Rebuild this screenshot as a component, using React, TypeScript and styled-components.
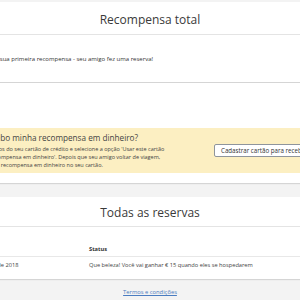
import styled, { createGlobalStyle } from "styled-components"

const Global = createGlobalStyle`
  html, body { margin: 0; padding: 0; background: #f3f3f3; overflow: hidden; }
  body { font-family: "Open Sans", "Noto Sans", sans-serif; color: #3c3c3c; }
`

const Page = styled.div`
  width: 420px;
  margin-left: -60px;
  padding-top: 2px;
`

const Card = styled.section`
  background: #fff;
  box-shadow: 0 1px 1px rgba(0, 0, 0, 0.12);
`

const CardHeader = styled.header<{ $h: number }>`
  height: ${p => p.$h}px;
  display: flex;
  align-items: center;
  justify-content: center;
  border-bottom: 1px solid #e4e4e4;
`

const Title = styled.h2`
  margin: 0;
  padding-top: 2px;
  font-size: 12px;
  font-weight: 400;
  color: #3a3a3a;
`

const Message = styled.p`
  margin: 0;
  height: 47px;
  padding: 1px 18px 0 22px;
  box-sizing: border-box;
  display: flex;
  align-items: center;
  font-size: 6px;
  color: #333;
`

const CashCard = styled(Card)`
  margin-top: 1px;
  padding: 45px 0 10px;
`

const Notice = styled.div`
  background: #fcefc2;
  height: 45px;
  padding: 0 18px;
  display: flex;
  align-items: center;
  gap: 16px;
`

const NoticeText = styled.div`
  width: 240px;
  flex-shrink: 0;
`

const NoticeTitle = styled.h3`
  margin: 0 0 1px 1px;
  font-size: 8.2px;
  font-weight: 400;
  color: #444;
  line-height: 12px;
  white-space: nowrap;
`

const NoticeBody = styled.p`
  margin: 0 0 0 8px;
  font-size: 5.5px;
  line-height: 8px;
  color: #444;
  white-space: nowrap;
`

const Button = styled.button`
  flex-shrink: 0;
  height: 13px;
  padding: 0 6px;
  background: #fff;
  border: 1px solid #8f959c;
  border-radius: 2px;
  font-family: inherit;
  font-size: 6.2px;
  color: #333;
`

const Bookings = styled(Card)`
  margin-top: 14px;
  padding-bottom: 7px;
`

const Table = styled.table`
  width: 100%;
  border-collapse: collapse;
  margin-top: 14px;
  font-size: 5.7px;
  color: #444;
`

const Cell = styled.td<{ $head?: boolean }>`
  height: 15px;
  padding: 0 0 0 18px;
  font-weight: ${p => (p.$head ? 700 : 400)};
  color: ${p => (p.$head ? "#333" : "#444")};
  border-bottom: ${p => (p.$head ? "1px solid #e8e8e8" : "none")};
  &:first-child { width: 113px; }
`

const Footer = styled.footer`
  padding-top: 9px;
  text-align: center;
  font-size: 5.8px;
`

const Link = styled.a`
  color: #4a7cc0;
  text-decoration: underline;
`

export default function App() {
  return (
    <Page>
      <Global />
      <Card>
        <CardHeader $h={32}>
          <Title>Recompensa total</Title>
        </CardHeader>
        <Message>Você ganhou sua primeira recompensa - seu amigo fez uma reserva!</Message>
      </Card>
      <CashCard>
        <Notice>
          <NoticeText>
            <NoticeTitle>Como recebo minha recompensa em dinheiro?</NoticeTitle>
            <NoticeBody>
              Insira os dados do seu cartão de crédito e selecione a opção 'Usar este cartão
              <br />
              para sua recompensa em dinheiro'. Depois que seu amigo voltar de viagem,
              <br />
              creditamos a recompensa em dinheiro no seu cartão.
            </NoticeBody>
          </NoticeText>
          <Button>Cadastrar cartão para receber</Button>
        </Notice>
      </CashCard>
      <Bookings>
        <CardHeader $h={29}>
          <Title>Todas as reservas</Title>
        </CardHeader>
        <Table>
          <tbody>
            <tr>
              <Cell $head>Data</Cell>
              <Cell $head>Status</Cell>
            </tr>
            <tr>
              <Cell>12 de outubro de 2018</Cell>
              <Cell>Que beleza! Você vai ganhar € 15 quando eles se hospedarem</Cell>
            </tr>
          </tbody>
        </Table>
      </Bookings>
      <Footer>
        <Link href="#">Termos e condições</Link>
      </Footer>
    </Page>
  )
}
